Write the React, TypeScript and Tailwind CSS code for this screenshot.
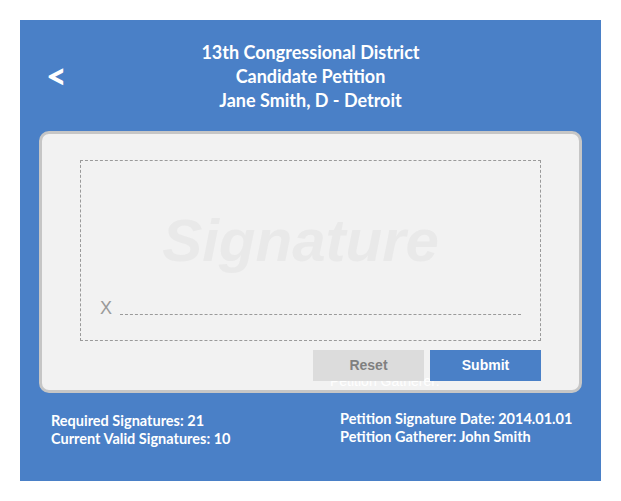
import React from "react";

const blue = "bg-[#4a80c7]";

const InfoLine: React.FC<{ label: string; value: string }> = ({ label, value }) => (
  <div>
    {label}: {value}
  </div>
);

const App: React.FC = () => {
  return (
    <div className="min-h-screen bg-white pt-5 pl-5">
      <div className={`relative w-[581px] h-[461px] ${blue} flex flex-col`}>
        {/* header */}
        <div className="grid grid-cols-[60px_1fr_60px] pt-5 text-white font-['Lato',sans-serif] font-bold">
          <div className="flex items-center pl-[26px] pb-[2px] text-[36px] leading-none font-black">&lt;</div>
          <div className="text-center text-[18px] leading-[24px]">
            <div>13th Congressional District</div>
            <div>Candidate Petition</div>
            <div>Jane Smith, D - Detroit</div>
          </div>
          <div />
        </div>

        {/* signature card */}
        <div className="relative mt-[19px] ml-[19px] w-[543px] h-[262px] rounded-[10px] border-[3px] border-[#c6c6c6] bg-[#f2f2f2] pt-[26px] pl-[38px]">
          <div className="w-[461px] h-[181px] border border-dashed border-[#9a9a9a] flex flex-col">
            <div className="h-[110px] pr-[20px] flex items-end justify-center">
              <span className="font-['Liberation_Sans',Arial,sans-serif] font-bold italic text-[60px] leading-[60px] text-[#e9e9e9]">
                Signature
              </span>
            </div>
            <div className="flex items-end px-[19px] mt-[28px]">
              <span className="font-['Liberation_Sans',Arial,sans-serif] text-[18px] leading-[18px] text-[#9a9a9a]">X</span>
              <div className="ml-[8px] mb-[2px] flex-1 border-t border-dashed border-[#9a9a9a]" />
            </div>
          </div>

          <span className="absolute left-[288px] top-[239px] font-['Liberation_Sans',Arial,sans-serif] text-[14px] leading-[16px] text-white">
            Petition Gatherer:
          </span>

          <div className="relative flex justify-end gap-[6px] w-[461px] mt-[9px] font-['Liberation_Sans',Arial,sans-serif] font-bold text-[14px]">
            <button className="w-[111px] h-[31px] bg-[#dcdcdc] text-[#808080]">Reset</button>
            <button className={`w-[111px] h-[31px] ${blue} text-white`}>Submit</button>
          </div>
        </div>

        {/* footer info */}
        <div className="flex mt-[19px] text-white font-['Lato',sans-serif] font-bold text-[14.5px] leading-[18px]">
          <div className="w-[320px] pl-[31px]">
            <InfoLine label="Required Signatures" value="21" />
            <InfoLine label="Current Valid Signatures" value="10" />
          </div>
          <div className="-mt-[2px]">
            <InfoLine label="Petition Signature Date" value="2014.01.01" />
            <InfoLine label="Petition Gatherer" value="John Smith" />
          </div>
        </div>
      </div>
    </div>
  );
};

export default App;
